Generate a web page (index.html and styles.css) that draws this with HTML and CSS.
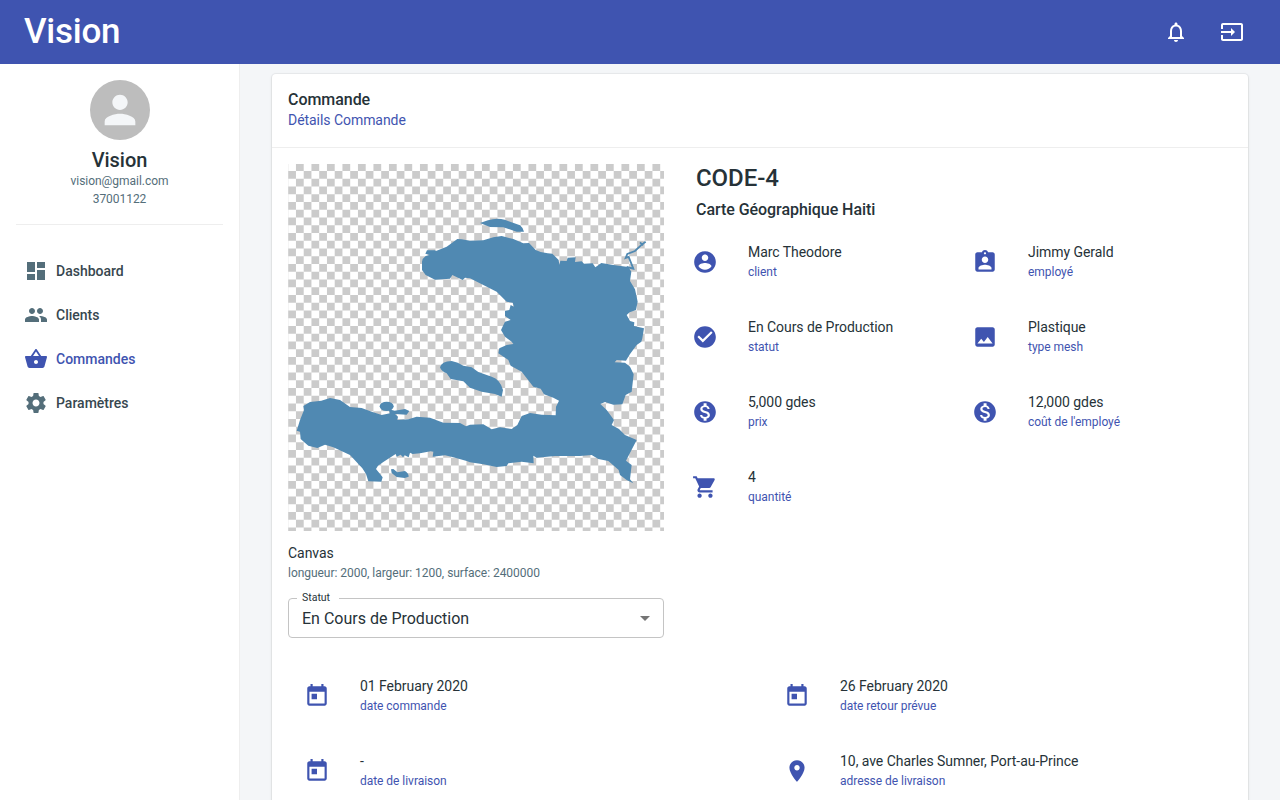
FILE: index.html
```html
<!DOCTYPE html>
<html lang="fr">
<head>
<meta charset="utf-8">
<title>Vision</title>
<link rel="stylesheet" href="styles.css">
</head>
<body>
<svg class="defs" aria-hidden="true">
  <symbol id="calendar" viewBox="0 0 24 24"><path d="M19 3h-1V1h-2v2H8V1H6v2H5c-1.11 0-1.99.9-1.99 2L3 19c0 1.1.89 2 2 2h14c1.1 0 2-.9 2-2V5c0-1.1-.9-2-2-2zm0 16H5V8h14v11zM7 10h5v5H7z"/></symbol>
  <symbol id="money" viewBox="0 0 24 24"><path d="M12 2C6.48 2 2 6.48 2 12s4.480 10 10 10 10-4.480 10-10S17.520 2 12 2zm1.410 16.090V20h-2.670v-1.930c-1.710-.36-3.160-1.460-3.270-3.400h1.960c.1 1.050.82 1.870 2.650 1.870 1.960 0 2.400-.98 2.400-1.590 0-.83-.44-1.610-2.670-2.140-2.480-.6-4.180-1.620-4.180-3.670 0-1.720 1.390-2.840 3.110-3.210V4h2.670v1.950c1.860.45 2.790 1.860 2.850 3.390H14.300c-.05-1.110-.64-1.870-2.220-1.870-1.500 0-2.400.68-2.400 1.640 0 .84.65 1.390 2.670 1.910s4.180 1.390 4.180 3.910c-.01 1.830-1.380 2.830-3.120 3.160z"/></symbol>
</svg>

<header class="topbar">
  <div class="brand">Vision</div>
  <div class="actions">
    <svg class="icon" viewBox="0 0 24 24"><path d="M12 22c1.100 0 2-.9 2-2h-4c0 1.100.89 2 2 2zm6-6v-5c0-3.070-1.640-5.640-4.500-6.320V4c0-.83-.67-1.500-1.500-1.500s-1.500.67-1.500 1.500v.68C7.630 5.360 6 7.920 6 11v5l-2 2v1h16v-1l-2-2zm-2 1H8v-6c0-2.480 1.510-4.500 4-4.500s4 2.020 4 4.500v6z"/></svg>
    <svg class="icon" viewBox="0 0 24 24"><path d="M21 3.010H3c-1.100 0-2 .9-2 2V9h2V4.990h18v14.030H3V15H1v4.010c0 1.100.9 1.980 2 1.980h18c1.100 0 2-.88 2-1.980v-14c0-1.110-.9-2-2-2zM11 16l4-4-4-4v3H1v2h10v3z"/></svg>
  </div>
</header>

<div class="shell">
  <aside class="sidebar">
    <div class="profile">
      <div class="avatar"><svg viewBox="0 0 24 24"><path d="M12 12c2.210 0 4-1.790 4-4s-1.790-4-4-4-4 1.790-4 4 1.790 4 4 4zm0 2c-2.670 0-8 1.340-8 4v2h16v-2c0-2.660-5.330-4-8-4z"/></svg></div>
      <div class="profile-name">Vision</div>
      <div class="profile-info">vision@gmail.com</div>
      <div class="profile-info">37001122</div>
    </div>
    <nav class="menu">
      <a class="menu-item"><svg class="icon" viewBox="0 0 24 24"><path d="M3 13h8V3H3v10zm0 8h8v-6H3v6zm10 0h8V11h-8v10zm0-18v6h8V3h-8z"/></svg>Dashboard</a>
      <a class="menu-item"><svg class="icon" viewBox="0 0 24 24"><path d="M16 11c1.660 0 2.990-1.340 2.990-3S17.660 5 16 5c-1.660 0-3 1.340-3 3s1.340 3 3 3zm-8 0c1.660 0 2.990-1.340 2.990-3S9.660 5 8 5C6.340 5 5 6.340 5 8s1.340 3 3 3zm0 2c-2.330 0-7 1.170-7 3.500V19h14v-2.500c0-2.330-4.670-3.500-7-3.500zm8 0c-.29 0-.62.02-.97.05 1.160.84 1.970 1.970 1.970 3.450V19h6v-2.500c0-2.330-4.670-3.500-7-3.500z"/></svg>Clients</a>
      <a class="menu-item active"><svg class="icon" viewBox="0 0 24 24"><path d="M17.210 9l-4.380-6.560c-.19-.28-.51-.42-.83-.42-.32 0-.64.14-.83.43L6.790 9H2c-.55 0-1 .45-1 1 0 .09.010.18.040.27l2.540 9.270c.23.84 1 1.460 1.920 1.460h13c.92 0 1.690-.62 1.930-1.460l2.540-9.270L23 10c0-.55-.45-1-1-1h-4.790zM9 9l3-4.400L15 9H9zm3 8c-1.100 0-2-.9-2-2s.9-2 2-2 2 .9 2 2-.9 2-2 2z"/></svg>Commandes</a>
      <a class="menu-item"><svg class="icon" viewBox="0 0 24 24"><path d="M19.430 12.980c.04-.32.07-.64.07-.98s-.03-.66-.07-.98l2.110-1.650c.19-.15.24-.42.12-.64l-2-3.460c-.12-.22-.39-.3-.61-.22l-2.490 1c-.52-.4-1.080-.73-1.690-.98l-.38-2.650C14.460 2.180 14.250 2 14 2h-4c-.25 0-.46.18-.49.42l-.38 2.650c-.61.25-1.170.59-1.690.98l-2.490-1c-.23-.09-.49 0-.61.22l-2 3.460c-.13.22-.07.49.12.64l2.110 1.650c-.04.32-.07.65-.07.98s.03.66.07.98l-2.110 1.650c-.19.15-.24.42-.12.64l2 3.460c.12.22.39.3.61.22l2.490-1c.52.4 1.080.73 1.690.98l.38 2.650c.03.24.24.42.49.42h4c.25 0 .46-.18.49-.42l.38-2.650c.61-.25 1.170-.59 1.690-.98l2.490 1c.23.09.49 0 .61-.22l2-3.460c.12-.22.07-.49-.12-.64l-2.110-1.650zM12 15.500c-1.930 0-3.500-1.570-3.500-3.500s1.570-3.500 3.500-3.500 3.500 1.570 3.500 3.500-1.570 3.500-3.500 3.500z"/></svg>Paramètres</a>
    </nav>
  </aside>

  <main class="content">
    <section class="card">
      <div class="card-header">
        <div class="card-title">Commande</div>
        <div class="card-subtitle">Détails Commande</div>
      </div>
      <div class="card-body">
        <div class="overview">
          <div class="preview">
            <svg class="map" viewBox="0 0 1128 1101" preserveAspectRatio="none">
              <defs>
                <pattern id="checker" x="0.600" y="-2.250" width="46.500" height="46.500" patternUnits="userSpaceOnUse">
                  <path fill="#cbcbcb" d="M23.250 0h23.250v23.250H23.250zM0 23.250h23.250V46.500H0z"/>
                </pattern>
              </defs>
              <rect width="1128" height="1101" fill="#fff"/>
              <rect width="1128" height="1101" fill="url(#checker)"/>
              <g fill="#5089b2">
                <path d="M402 293L404 285L413 276L425 273L412 269L417 259L441 259L444 261L476 248L508 225L521 226L546 230L586 229L616 220L641 216L676 225L706 238L723 237L743 258L758 264L779 268L793 269L812 288L814 302L817 290L836 291L839 281L863 280L861 294L881 292L888 299L914 298L922 310L940 297L976 303L1021 309L1030 323L1026 351L1041 376L1049 413L1044 438L1025 445L1016 453L1026 471L1039 475L1038 486L1068 493L1063 523L1060 533L1046 543L1024 573L1014 590L986 588L980 595L1011 596L1026 608L1037 631L1031 683L1013 693L1003 721L976 722L951 714L937 720L956 738L978 768L971 783L993 795L1011 813L1046 828L1014 890L1031 903L1026 946L1036 958L1016 948L996 933L992 918L961 891L931 885L911 873L876 876L801 876L746 881L736 875L737 898L701 893L661 898L656 906L626 909L586 901L546 895L536 891L496 880L471 874L434 878L436 863L428 862L396 868L374 870L366 866L362 880L350 874L345 880L338 872L326 878L323 870L286 894L270 905L264 915L284 940L280 953L241 952L234 930L223 913L186 873L136 850L111 842L88 852L61 845L38 825L36 803L26 800L36 768L48 738L46 726L66 714L100 710L126 702L156 708L186 729L221 732L251 743L281 753L306 748L301 735L320 740L351 735L364 741L356 752L321 750L330 758L328 768L361 766L386 758L426 761L466 776L516 777L534 787L546 782L586 781L611 796L636 790L671 795L688 783L701 756L726 747L761 752L803 754L804 728L813 710L796 701L768 691L758 674L736 668L701 623L668 605L661 588L631 568L634 553L656 543L676 540L671 533L651 518L639 498L651 473L668 468L651 456L651 441L664 438L668 423L678 428L674 416L656 413L626 383L586 363L546 343L531 341L524 348L493 333L486 344L441 347L413 333L402 318Z"/>
                <path d="M576 177L600 169Q625 160 650 167L696 184Q706 192 708 203L686 203L646 190L606 189Z"/>
                <path d="M456 610Q460 592 491 591Q510 595 526 605L551 610L571 624L611 638Q636 645 645 678L641 698L621 690L581 683L546 671L526 652L488 645L476 628Q460 622 456 610Z"/>
                <ellipse cx="296" cy="727" rx="21" ry="14"/>
                <path d="M309 916L316 915L328 925L351 921Q362 928 362 938L350 942L326 939L311 927Z"/>
                <path fill="none" stroke="#5089b2" stroke-width="5.500" d="M1016 309L1036 314L1022 279L1013 282L1018 270L1041 261L1062 241L1073 233M1056 235L1062 241L1066 243"/>
              </g>
            </svg>
            <div class="text-main caption">Canvas</div>
            <div class="text-muted">longueur: 2000, largeur: 1200, surface: 2400000</div>
            <fieldset class="select">
              <legend>Statut</legend>
              <div class="select-value">En Cours de Production<svg class="icon" viewBox="0 0 24 24"><path d="M7 10l5 5 5-5z"/></svg></div>
            </fieldset>
          </div>
          <div class="details">
            <h3>CODE-4</h3>
            <h5>Carte Géographique Haiti</h5>
            <div class="facts">
              <div class="fact"><svg class="icon" viewBox="0 0 24 24"><path d="M12 2C6.480 2 2 6.480 2 12s4.480 10 10 10 10-4.480 10-10S17.520 2 12 2zm0 3c1.660 0 3 1.340 3 3s-1.340 3-3 3-3-1.340-3-3 1.340-3 3-3zm0 14.200c-2.500 0-4.710-1.280-6-3.220.03-1.990 4-3.080 6-3.080 1.990 0 5.970 1.090 6 3.080-1.290 1.940-3.500 3.220-6 3.220z"/></svg><div><div class="text-main">Marc Theodore</div><div class="text-link">client</div></div></div>
              <div class="fact"><svg class="icon" viewBox="0 0 24 24"><path d="M19 3h-4.180C14.400 1.840 13.300 1 12 1c-1.300 0-2.400.84-2.820 2H5c-1.100 0-2 .9-2 2v14c0 1.100.9 2 2 2h14c1.100 0 2-.9 2-2V5c0-1.100-.9-2-2-2zm-7 0c.55 0 1 .45 1 1s-.45 1-1 1-1-.45-1-1 .45-1 1-1zm0 4c1.660 0 3 1.340 3 3s-1.340 3-3 3-3-1.340-3-3 1.340-3 3-3zm6 12H6v-1.400c0-2 4-3.100 6-3.100s6 1.100 6 3.100V19z"/></svg><div><div class="text-main">Jimmy Gerald</div><div class="text-link">employé</div></div></div>
              <div class="fact"><svg class="icon" viewBox="0 0 24 24"><path d="M12 2C6.480 2 2 6.480 2 12s4.480 10 10 10 10-4.480 10-10S17.520 2 12 2zm-2 15l-5-5 1.410-1.410L10 14.170l7.590-7.590L19 8l-9 9z"/></svg><div><div class="text-main">En Cours de Production</div><div class="text-link">statut</div></div></div>
              <div class="fact"><svg class="icon" viewBox="0 0 24 24"><path d="M21 19V5c0-1.100-.9-2-2-2H5c-1.100 0-2 .9-2 2v14c0 1.100.9 2 2 2h14c1.100 0 2-.9 2-2zM8.500 13.500l2.500 3.010L14.500 12l4.500 6H5l3.500-4.500z"/></svg><div><div class="text-main">Plastique</div><div class="text-link">type mesh</div></div></div>
              <div class="fact"><svg class="icon"><use href="#money"/></svg><div><div class="text-main">5,000 gdes</div><div class="text-link">prix</div></div></div>
              <div class="fact"><svg class="icon"><use href="#money"/></svg><div><div class="text-main">12,000 gdes</div><div class="text-link">coût de l'employé</div></div></div>
              <div class="fact"><svg class="icon" viewBox="0 0 24 24"><path d="M7 18c-1.100 0-1.990.9-1.990 2S5.900 22 7 22s2-.9 2-2-.9-2-2-2zM1 2v2h2l3.600 7.590-1.350 2.450c-.16.28-.25.61-.25.96 0 1.100.9 2 2 2h12v-2H7.420c-.14 0-.25-.11-.25-.25l.03-.12.9-1.630h7.450c.75 0 1.410-.41 1.750-1.030l3.580-6.490c.08-.14.12-.31.12-.48 0-.55-.45-1-1-1H5.210l-.94-2H1zm16 16c-1.100 0-1.990.9-1.990 2s.89 2 1.990 2 2-.9 2-2-.9-2-2-2z"/></svg><div><div class="text-main">4</div><div class="text-link">quantité</div></div></div>
            </div>
          </div>
        </div>
        <div class="facts dates">
          <div class="fact"><svg class="icon"><use href="#calendar"/></svg><div><div class="text-main">01 February 2020</div><div class="text-link">date commande</div></div></div>
          <div class="fact"><svg class="icon"><use href="#calendar"/></svg><div><div class="text-main">26 February 2020</div><div class="text-link">date retour prévue</div></div></div>
          <div class="fact"><svg class="icon"><use href="#calendar"/></svg><div><div class="text-main">-</div><div class="text-link">date de livraison</div></div></div>
          <div class="fact"><svg class="icon" viewBox="0 0 24 24"><path d="M12 2C8.130 2 5 5.130 5 9c0 5.250 7 13 7 13s7-7.750 7-13c0-3.870-3.130-7-7-7zm0 9.500c-1.380 0-2.500-1.120-2.500-2.500s1.120-2.500 2.500-2.500 2.500 1.120 2.500 2.500-1.120 2.500-2.500 2.500z"/></svg><div><div class="text-main">10, ave Charles Sumner, Port-au-Prince</div><div class="text-link">adresse de livraison</div></div></div>
        </div>
      </div>
    </section>
  </main>
</div>
</body>
</html>
```
FILE: styles.css
```css
* { box-sizing: border-box; }
html, body { height: 100%; }
body {
  margin: 0;
  display: flex;
  flex-direction: column;
  overflow: hidden;
  background: #f4f6f8;
  color: #263238;
  font-family: Roboto, sans-serif;
  font-size: 14px;
  line-height: 21px;
  letter-spacing: -0.05px;
}
h3, h5 { margin: 0; font-weight: 500; }
.defs { display: none; }
.icon { width: 24px; height: 24px; flex: none; fill: currentColor; }

.topbar {
  flex: none;
  height: 64px;
  padding: 0 36px 0 24px;
  display: flex;
  justify-content: space-between;
  align-items: center;
  background: #3f54b0;
  color: #fff;
}
.brand { font-size: 35px; font-weight: 500; line-height: 40px; letter-spacing: -0.24px; }
.actions { display: flex; gap: 32px; }

.shell { flex: 1; min-height: 0; display: flex; }
.sidebar { width: 240px; flex: none; padding: 16px; background: #fff; border-right: 1px solid #eee; }
.profile {
  display: flex;
  flex-direction: column;
  align-items: center;
  height: 145px;
  border-bottom: 1px solid #eee;
}
.avatar {
  width: 60px;
  height: 60px;
  display: grid;
  place-items: center;
  border-radius: 50%;
  background: #bdbdbd;
}
.avatar svg { width: 46px; height: 46px; fill: #f4f6f8; }
.profile-name { margin-top: 8px; font-size: 20px; font-weight: 500; line-height: 24px; letter-spacing: -0.06px; }
.profile-info, .text-muted { font-size: 12px; line-height: 18px; letter-spacing: -0.04px; color: #546e7a; }
.menu { margin-top: 24px; }
.menu-item {
  height: 44px;
  padding-left: 8px;
  display: flex;
  align-items: center;
  gap: 8px;
  font-weight: 500;
  letter-spacing: 0;
  color: #37474f;
}
.menu-item .icon { color: #546e7a; }
.menu-item.active, .menu-item.active .icon { color: #3f54b0; }

.content { flex: 1; padding: 10px 32px; overflow: hidden; }
.card {
  height: 780px;
  background: #fff;
  border-radius: 4px;
  box-shadow: 0 0 0 1px rgba(63, 63, 68, 0.05), 0 1px 3px 0 rgba(63, 63, 68, 0.15);
}
.card-header { padding: 16px; border-bottom: 1px solid #eee; }
.card-title { font-size: 16px; font-weight: 500; line-height: 20px; }
.card-subtitle { color: #3f54b0; }
.card-body { padding: 16px; }
.overview { display: flex; gap: 32px; }
.preview { width: 376px; flex: none; }
.map { display: block; width: 376px; height: 367px; }
.caption { margin-top: 12px; }
.select {
  margin: 10px 0 0;
  height: 46px;
  padding: 0 8px 0 5px;
  border: 1px solid #c4c4c4;
  border-radius: 4px;
  min-width: 0;
}
.select legend {
  height: 12px;
  margin-left: 3px;
  padding: 0 9px 0 5px;
  font-size: 10.500px;
  line-height: 12px;
  letter-spacing: 0;
}
.select-value {
  height: 28px;
  padding-left: 8px;
  display: flex;
  align-items: center;
  justify-content: space-between;
  font-size: 16px;
  letter-spacing: 0;
}
.select-value .icon { color: #757575; margin-right: -2px; }

.details { flex: 1; }
.details h3 { font-size: 24px; line-height: 28px; letter-spacing: -0.06px; }
.details h5 { margin-top: 8px; font-size: 16px; line-height: 20px; }
.facts { display: grid; grid-template-columns: 280px 1fr; grid-auto-rows: 75px; }
.details .facts { margin: 22px 0 0 -4px; }
.fact { display: flex; gap: 30px; }
.fact .icon { width: 26px; height: 26px; margin-top: 7px; color: #3f54b0; }
.text-link { font-size: 12px; line-height: 18px; letter-spacing: -0.04px; color: #3f54b0; }
.dates { margin: 38px 0 0 16px; grid-template-columns: 480px 1fr; }
```
